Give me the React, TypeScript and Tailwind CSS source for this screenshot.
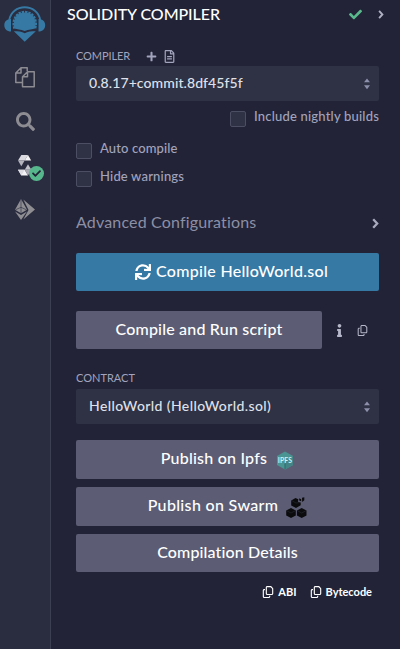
import React from 'react';
import { FaCheck, FaPlus, FaRegFileAlt, FaSearch, FaSync, FaInfo } from 'react-icons/fa';
import { FaRegCopy } from 'react-icons/fa6';

function RemixLogo() {
  return (
    <svg width="42" height="36" viewBox="0 0 42 36" className="text-[#3679a4]">
      <path d="M5.300 14C6.500 6.500 13 1.300 20.700 1.300S35 6.500 36.200 14" fill="none" stroke="currentColor" strokeWidth="1.900" />
      <path d="M7 13C2.800 13 .3 15.500 .3 19.200S2.800 25.500 7 25.500zM34.500 13c4.200 0 6.700 2.500 6.700 6.200s-2.500 6.300-6.700 6.300z" fill="currentColor" />
      <path d="M10.500 22.500C8.500 16 11 6.500 20.700 6.500S33 16 31 22.500c-2.500 1-6 .8-10.300 2.600-4.300-1.800-7.700-1.600-10.200-2.600z" fill="currentColor" />
      <path d="M10.500 22.500C8 16 11 6 20.700 6S33.500 16 31 22.500" fill="none" stroke="currentColor" strokeWidth="2.400" strokeDasharray="2.400 .9" />
      <path d="M9.800 25.200c4.500 0 8 .3 10.900 2 3-1.700 6.500-2 11.100-2L20.700 35.700z" fill="currentColor" />
    </svg>
  );
}

function FilesIcon() {
  return (
    <svg width="20" height="21" viewBox="0 0 20 21" fill="none" stroke="#8c8c92" strokeWidth="1.500" strokeLinejoin="round">
      <path d="M7 15.500H.8V6L6 .8h6.200V4M6 .8V6H.8" />
      <path d="M12.500 4.800h6.700v15H7.500V9.800zM12.500 4.800v5h-5" />
    </svg>
  );
}

function SolidityIcon() {
  return (
    <svg width="14" height="21" viewBox="0 0 14 21">
      <path d="M3.300 0H10L6.700 5.600H0z" fill="#d9d9df" />
      <path d="M10 0l3.200 5.600H6.700z" fill="#f4f4f6" />
      <path d="M0 5.600h6.700l-3.400 5.600z" fill="#b4b4bf" />
      <path d="M10 9.200L6.700 14.800h6.600z" fill="#c3c3cc" />
      <path d="M3.300 20.400H10L6.700 14.800H0z" fill="#f4f4f6" />
      <path d="M0 14.800h6.700l-3.400 5.600z" fill="#dcdce2" />
      <path d="M6.700 14.800h6.600L10 20.400z" fill="#a9a9b4" />
    </svg>
  );
}

function DeployIcon() {
  return (
    <svg width="20" height="21" viewBox="0 0 20 21" fill="#8e8e93">
      <path d="M6 0l6 10.800-6 3.500-6-3.500zM0 12.500l6 3.500 6-3.500L6 21z" />
      <path d="M8.300.5L20 10.500 8.300 20.500l5.200-9.400z" />
      <path d="M6 .5v13.500M.5 10.800L6 8.300l5.500 2.500" fill="none" stroke="#2a2c3f" strokeWidth=".6" />
    </svg>
  );
}

function IpfsIcon() {
  return (
    <svg width="18" height="19" viewBox="0 0 18 19">
      <path d="M9 .5l8 4.600v8.800l-8 4.600-8-4.600V5.100z" fill="#4b9494" />
      <path d="M9 9.500l8-4.400v8.800l-8 4.600z" fill="#438587" />
      <path d="M9 12.500v5.500" stroke="#2c686d" strokeWidth="1" />
      <text x="9" y="12.200" textAnchor="middle" textLength="14.500" lengthAdjust="spacingAndGlyphs" fontSize="7.500" fontWeight="700" fontFamily="Lato, sans-serif" fill="#d6eeee">IPFS</text>
    </svg>
  );
}

function SwarmIcon() {
  return (
    <svg width="21" height="21" viewBox="0 0 21 21">
      <g fill="#0b0b0e">
        <path d="M5 11l4.800 2.500v5L5 21 .2 18.500v-5zM15.700 11l4.800 2.500v5L15.700 21l-4.800-2.500v-5z" />
        <path d="M9.500 1l2.800 1.300-.3 2.500 2.700.7v2.700L10 10.900 5.200 8.400V3.400z" />
        <path d="M13.200 1.200l2 1v2l-2-.8zM16 .8l2.300-.5v3L16.200 5z" />
      </g>
      <path d="M.7 13.700L5 16l4.300-2.300M11.400 13.700l4.300 2.300 4.300-2.300M5.700 3.600L10 6l4-.5" fill="none" stroke="#292b32" strokeWidth=".6" />
    </svg>
  );
}

function Chevron({ className }: { className: string }) {
  return (
    <svg viewBox="0 0 7 11" className={className} fill="none" stroke="currentColor" strokeWidth="2.300">
      <path d="M1.200 1.200l4 4.300-4 4.300" />
    </svg>
  );
}

function Checkbox({ label, tracking }: { label: string; tracking: string }) {
  return (
    <label className="flex h-[20px] items-start">
      <span className="mt-[4px] mr-[8px] size-[16px] shrink-0 rounded-[2px] border border-[#4c4e63] bg-[#2f3145]" />
      <span className={`text-[13px] leading-[19px] font-medium text-[#a2a3bd] ${tracking}`}>{label}</span>
    </label>
  );
}

function SelectBox({ value, tracking }: { value: string; tracking: string }) {
  return (
    <div className="flex h-[35px] items-center justify-between rounded-[2px] bg-[#2f3145] pr-[9px] pl-[13px] text-[14px] font-medium text-[#dfe1ea]">
      <span className={`pb-[2px] ${tracking}`}>{value}</span>
      <svg width="6" height="12" viewBox="0 0 6 12" fill="#8d90ab">
        <path d="M0 4.300L3 .5l3 3.800zM0 7.300h6L3 11.300z" />
      </svg>
    </div>
  );
}

function Button({ children, className }: { children: React.ReactNode; className: string }) {
  return <button className={`flex items-center justify-center rounded-[2px] text-[16px] font-medium whitespace-nowrap text-white ${className}`}>{children}</button>;
}

export default function App() {
  return (
    <div className="flex h-[649px] w-[400px] overflow-hidden bg-[#222336] font-[Lato,'Open_Sans',sans-serif] whitespace-nowrap">
      <aside className="flex w-[51px] shrink-0 flex-col items-center border-r border-[#3c3e52] bg-[#2a2c3f] pt-[6px]">
        <RemixLogo />
        <div className="mt-[25px]"><FilesIcon /></div>
        <FaSearch className="mt-[24px] text-[#8c8c92]" size={19} />
        <div className="relative mt-[24px]">
          <SolidityIcon />
          <span className="absolute top-[11px] left-[11px] flex size-[15px] items-center justify-center rounded-full bg-[#57b78c] text-[#222336]"><FaCheck size={9} /></span>
        </div>
        <div className="mt-[23px]"><DeployIcon /></div>
      </aside>
      <main className="min-w-0 flex-1">
        <header className="flex h-[28px] items-center pr-[16px] pl-[16px]">
          <h1 className="flex-1 text-[16px] font-medium tracking-[-0.06px] text-white">SOLIDITY COMPILER</h1>
          <FaCheck className="mr-[16px] text-[#59b98d]" size={13} />
          <Chevron className="h-[9px] w-[6px] text-[#b0b1c2]" />
        </header>
        <div className="pr-[21px] pl-[25px]">
          <div className="mt-[19px] flex h-[19px] items-center text-[#a2a3bd]">
            <span className="w-[70px] text-[11px] tracking-[-0.1px]">COMPILER</span>
            <FaPlus size={11} />
            <FaRegFileAlt className="ml-[6px]" size={13} />
          </div>
          <SelectBox value="0.8.17+commit.8df45f5f" tracking="tracking-[0.09px]" />
          <div className="mt-[6px] flex justify-end"><Checkbox label="Include nightly builds" tracking="tracking-[0.2px]" /></div>
          <div className="mt-[12px]"><Checkbox label="Auto compile" tracking="tracking-[0.12px]" /></div>
          <div className="mt-[8px]"><Checkbox label="Hide warnings" tracking="tracking-[0.18px]" /></div>
          <div className="mt-[23px] flex h-[24px] items-center justify-between text-[16px] text-[#8d8fa5]">
            <span className="tracking-[0.16px]">Advanced Configurations</span>
            <Chevron className="mt-[3px] h-[11px] w-[7px] text-[#a9aabd]" />
          </div>
          <Button className="mt-[19px] h-[38px] w-full bg-[#3679a4] pl-[8px] tracking-[0.3px]"><FaSync size={16} className="mr-[5px]" /><span className="pb-[2px]">Compile HelloWorld.sol</span></Button>
          <div className="mt-[20px] flex items-center text-[#b6b7c9]">
            <Button className="h-[38px] w-[246px] bg-[#5c5d74] tracking-[0.19px]"><span className="pb-[2px]">Compile and Run script</span></Button>
            <FaInfo className="ml-[11px]" size={13} />
            <FaRegCopy className="ml-[11px]" size={11} />
          </div>
          <div className="mt-[19px] h-[21px] text-[11px] leading-[20px] text-[#a2a3bd]">CONTRACT</div>
          <SelectBox value="HelloWorld (HelloWorld.sol)" tracking="tracking-[0.4px]" />
          <Button className="mt-[16px] h-[39px] w-full bg-[#5c5d74] tracking-[0.22px]"><span className="pb-[3px]">Publish on Ipfs</span><span className="ml-[9px] pt-px"><IpfsIcon /></span></Button>
          <Button className="mt-[8px] h-[39px] w-full bg-[#5c5d74] tracking-[0.33px]"><span className="pb-[3px]">Publish on Swarm</span><span className="ml-[8px] pt-[2px]"><SwarmIcon /></span></Button>
          <Button className="mt-[8px] h-[38px] w-full bg-[#5c5d74] tracking-[0.13px]"><span className="pb-[2px]">Compilation Details</span></Button>
          <div className="mt-[10px] flex h-[20px] items-center justify-end pr-[7px] text-[11px] font-bold text-white">
            <FaRegCopy size={12} className="mr-[4px]" />ABI
            <FaRegCopy size={12} className="mr-[4px] ml-[13px]" />Bytecode
          </div>
        </div>
      </main>
    </div>
  );
}
